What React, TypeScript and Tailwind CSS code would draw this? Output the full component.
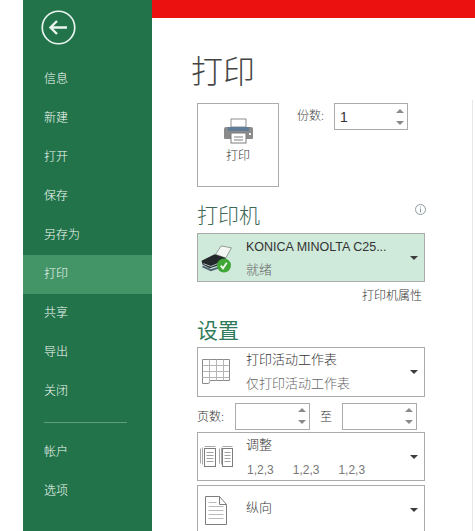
import React from 'react';

const font = { fontFamily: '"Noto Sans CJK SC", "Liberation Sans", sans-serif' };

const menuTop = ['信息', '新建', '打开', '保存', '另存为', '打印', '共享', '导出', '关闭'];
const menuBottom = ['帐户', '选项'];

const MenuItem: React.FC<{ label: string; active?: boolean }> = ({ label, active }) => (
  <div className={`h-[39px] flex items-center pl-[21px] pb-[4px] text-[12px] font-light text-[#f4faf6] ${active ? 'bg-[#439467]' : ''}`}>
    {label}
  </div>
);

const Caret = () => (
  <svg width="8" height="4" viewBox="0 0 8 4" className="shrink-0">
    <path d="M0 0h8L4 4z" fill="#3c3c3c" />
  </svg>
);

const Spin: React.FC<{ className: string; value?: string }> = ({ className, value }) => (
  <div className={`border border-[#ababab] bg-white flex items-center justify-between ${className}`}>
    <span className="pl-[5px] text-[14px] text-[#333] leading-none" style={{ fontFamily: '"Liberation Sans", sans-serif' }}>
      {value}
    </span>
    <div className="flex flex-col gap-[8px] pr-[3px]">
      <svg width="8" height="4" viewBox="0 0 8 4"><path d="M4 0l4 4H0z" fill="#8a8a8a" /></svg>
      <svg width="8" height="4" viewBox="0 0 8 4"><path d="M0 0h8L4 4z" fill="#8a8a8a" /></svg>
    </div>
  </div>
);

const Dropdown: React.FC<{
  icon: React.ReactNode;
  className: string;
  iconClass: string;
  children: React.ReactNode;
}> = ({ icon, className, iconClass, children }) => (
  <div className={`w-[228px] flex items-center border border-[#ababab] ${className}`}>
    <div className={`w-[48px] shrink-0 flex ${iconClass}`}>{icon}</div>
    <div className="flex-1 min-w-0">{children}</div>
    <div className="pr-[6px]">
      <Caret />
    </div>
  </div>
);

const PrinterIcon = () => (
  <svg width="29" height="26" viewBox="0 0 29 26">
    <rect x="7" y="1" width="15" height="8" fill="#fff" stroke="#8f8f8f" />
    <path d="M2 9h25a2 2 0 0 1 2 2v9a1 1 0 0 1-1 1H1a1 1 0 0 1-1-1v-9a2 2 0 0 1 2-2z" fill="#8b8b8b" />
    <rect x="4" y="9" width="21" height="4" fill="#5f7d96" />
    <rect x="7" y="15" width="15" height="10" fill="#fff" stroke="#7c7c7c" />
    <path d="M10 19h9M10 22h9" stroke="#7c7c7c" />
    <rect x="25" y="15" width="2" height="2" fill="#eee" />
  </svg>
);

const DevicePrinter = () => (
  <svg width="33" height="28" viewBox="0 0 34 30">
    <path d="M16 10L22 1l11 2-6 11z" fill="#f4f6f4" stroke="#8c9a92" />
    <path d="M1 17l14-7 12 4-3 6-14 5-8-4z" fill="#23282b" />
    <path d="M3 20l8 3 12-5" stroke="#b9c6c9" fill="none" />
    <path d="M2 23l9 4 9-3" stroke="#4d6272" strokeWidth="2" fill="none" />
    <circle cx="25" cy="22" r="7.500" fill="#3fa535" />
    <path d="M21.500 22l2.500 3 4-6" stroke="#e9f7e4" strokeWidth="2" fill="none" />
  </svg>
);

const SheetIcon = () => (
  <svg width="29" height="27" viewBox="0 0 29 27" fill="none" stroke="#8a8a8a">
    <path d="M.5.500h27v21h-19l-2 3h-6z" fill="#fff" />
    <path d="M.5 6.500h27M.5 12.500h27M.5 18.500h27M7.500.500v24M14.500.500v21M21.500.500v21" stroke="#b5b5b5" />
  </svg>
);

const CollateIcon = () => (
  <svg width="33" height="21" viewBox="0 0 33 21" fill="none" stroke="#7d7d7d">
    <path d="M.5 2.500v15M2.500 1.500v17M4.500.500h11M19.500 2.500v15M21.500 1.500v17M22.500.500h10" stroke="#a8a8a8" />
    <rect x="4.500" y="2.500" width="11" height="18" fill="#fff" />
    <rect x="22.500" y="2.500" width="10" height="18" fill="#fff" />
    <path d="M6.500 6.500h7M6.500 9.500h7M6.500 12.500h7M6.500 15.500h7M24.500 6.500h6M24.500 9.500h6M24.500 12.500h6M24.500 15.500h6" stroke="#a0a0a0" />
  </svg>
);

const PageIcon = () => (
  <svg width="22" height="29" viewBox="0 0 22 29" fill="none" stroke="#7d7d7d">
    <path d="M.5.500h14l7 8v20H.5z" fill="#fff" />
    <path d="M14.500.500v8h7" />
    <path d="M3.500 6.500h8M3.500 10.500h15M3.500 14.500h15M3.500 18.500h15M3.500 22.500h15" stroke="#bbb" />
  </svg>
);

export default function App() {
  return (
    <div className="w-[475px] h-[531px] overflow-hidden flex bg-white" style={font}>
      <div className="w-[23px] shrink-0" />

      <div className="w-[129px] shrink-0 bg-[#22734a] flex flex-col">
        <div className="h-[60px] pl-[18px] pt-[10px]">
          <svg width="35" height="35" viewBox="0 0 35 35" fill="none" stroke="#e9f5ee">
            <circle cx="17.500" cy="17.500" r="16.250" strokeWidth="1.700" />
            <path d="M26 17.500H10M16 11l-6.500 6.500L16 24" strokeWidth="2.400" />
          </svg>
        </div>
        {menuTop.map((label) => (
          <MenuItem key={label} label={label} active={label === '打印'} />
        ))}
        <div className="h-px bg-[#5f9f7c] ml-[21px] mr-[25px] mt-[11px] mb-[10px]" />
        {menuBottom.map((label) => (
          <MenuItem key={label} label={label} />
        ))}
      </div>

      <div className="flex-1 min-w-0 flex flex-col">
        <div className="h-[18px] bg-[#ec1111] shrink-0" />
        <div className="flex-1 min-h-0 flex">
          <div className="w-[320px] pl-[45px]">
            <h1 className="ml-[-6px] mt-[28px] h-[57px] text-[32px] leading-[46px] font-light text-[#444]">打印</h1>

            <div className="flex items-start">
              <div className="w-[82px] h-[84px] border border-[#ababab] flex flex-col items-center pt-[14px]">
                <PrinterIcon />
                <span className="mt-[3px] text-[12px] font-light text-[#333] leading-[16px]">打印</span>
              </div>
              <span className="ml-[18px] mr-[10px] mt-[4px] text-[12px] font-light leading-[16px] text-[#444] whitespace-nowrap">份数:</span>
              <Spin className="w-[74px] h-[27px]" value="1" />
            </div>

            <div className="mt-[14px] h-[32px] w-[228px] flex justify-between">
              <h2 className="text-[21px] leading-[26px] font-light text-[#3d6a55]">打印机</h2>
              <svg width="11" height="11" viewBox="0 0 11 11" fill="none" stroke="#8c9aa0" className="mt-[3px] mr-[-1px]">
                <circle cx="5.500" cy="5.500" r="5" />
                <path d="M5.500 2.500v1M5.500 4.500v4" />
              </svg>
            </div>
            <Dropdown icon={<DevicePrinter />} iconClass="pl-[2px] pt-[2px]" className="h-[49px] bg-[#cfe9da]">
              <div className="text-[12.500px] leading-[18px] text-[#333] whitespace-nowrap" style={{ fontFamily: '"Liberation Sans", sans-serif' }}>
                KONICA MINOLTA C25...
              </div>
              <div className="mt-[4px] text-[13px] font-light leading-[17px] text-[#666]">就绪</div>
            </Dropdown>
            <div className="w-[225px] mt-[4px] h-[18px] text-right text-[12px] font-light leading-[18px] text-[#333]">打印机属性</div>

            <h2 className="mt-[13px] h-[30px] text-[21px] leading-[24px] text-[#2f7a5b]">设置</h2>
            <Dropdown icon={<SheetIcon />} iconClass="pl-[4px]" className="h-[50px]">
              <div className="pb-[2px]">
                <div className="text-[13px] font-light leading-[18px] text-[#333]">打印活动工作表</div>
                <div className="mt-[6px] text-[13px] font-light leading-[18px] text-[#666]">仅打印活动工作表</div>
              </div>
            </Dropdown>

            <div className="mt-[6px] h-[26px] flex items-center text-[12px] font-light text-[#333]">
              <span className="w-[38px]">页数:</span>
              <Spin className="w-[75px] h-[27px]" />
              <span className="w-[32px] text-center">至</span>
              <Spin className="w-[75px] h-[27px]" />
            </div>

            <Dropdown icon={<CollateIcon />} iconClass="pl-[2px]" className="mt-[3px] h-[49px]">
              <div className="text-[13px] font-light leading-[18px] text-[#333]">调整</div>
              <div className="mt-[8px] pl-[1px] flex gap-[19px] text-[12px] leading-[18px] text-[#777]" style={{ fontFamily: '"Liberation Sans", sans-serif' }}>
                <span>1,2,3</span>
                <span>1,2,3</span>
                <span>1,2,3</span>
              </div>
            </Dropdown>

            <Dropdown icon={<PageIcon />} iconClass="pl-[7px]" className="mt-[4px] h-[50px]">
              <div className="pb-[6px] text-[13px] font-light leading-[18px] text-[#333]">纵向</div>
            </Dropdown>
          </div>
          <div className="mt-[82px] w-px bg-[#e6e6e6]" />
        </div>
      </div>
    </div>
  );
}
